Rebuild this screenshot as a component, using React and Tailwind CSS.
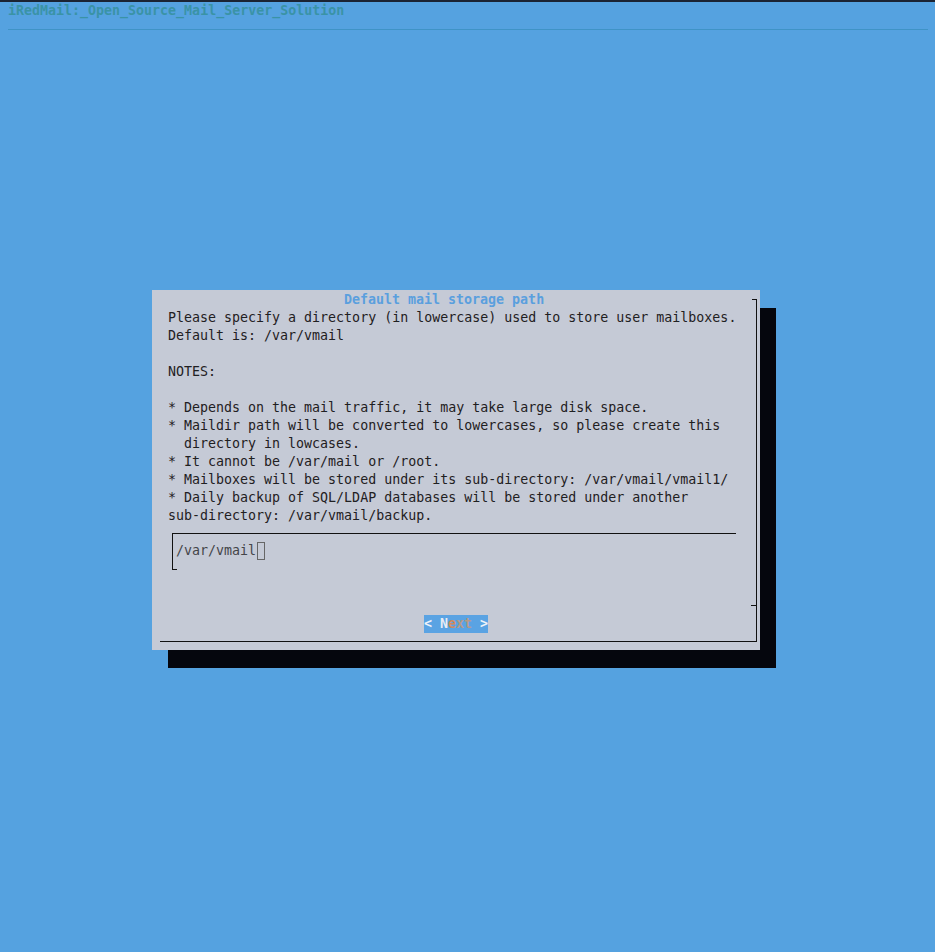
import React from "react";

const lines = [
  "Please specify a directory (in lowercase) used to store user mailboxes.",
  "Default is: /var/vmail",
  "",
  "NOTES:",
  "",
  "* Depends on the mail traffic, it may take large disk space.",
  "* Maildir path will be converted to lowercases, so please create this",
  "  directory in lowcases.",
  "* It cannot be /var/mail or /root.",
  "* Mailboxes will be stored under its sub-directory: /var/vmail/vmail1/",
  "* Daily backup of SQL/LDAP databases will be stored under another",
  "sub-directory: /var/vmail/backup.",
];

const mono = { fontFamily: '"DejaVu Sans Mono", "Liberation Mono", monospace' };

function Row({ children, className = "" }) {
  return <div className={`h-[18px] leading-[18px] whitespace-pre ${className}`}>{children}</div>;
}

export default function App() {
  return (
    <div
      className="w-[935px] h-[952px] bg-[#55a2e0] flex flex-col text-[13.3px] overflow-hidden"
      style={mono}
    >
      <div className="h-[2px] bg-[#1b2434]" />
      <Row className="pl-[8px] font-bold text-[#3a93a6]">iRedMail:_Open_Source_Mail_Server_Solution</Row>
      <div className="h-[18px] flex items-center pl-[8px]">
        <div className="h-px w-[920px] bg-[#3f93c6]" />
      </div>

      {/* dialog */}
      <div className="mt-[252px] ml-[152px] w-[608px] h-[360px] bg-[#c5cad6] shadow-[16px_18px_0_0_#05060d] flow-root">
        <div className="ml-[8px] mt-[9px] w-[597px] h-[343px] border-r border-b border-[#111] relative flow-root">
          <div className="absolute top-0 right-0 w-[4px] h-px bg-[#111]" />
          <div className="absolute top-[306px] right-0 w-[5px] h-px bg-[#111]" />
          <div className="-mt-[8px] pl-[8px] text-[#1f2022]">
            <Row className="pl-[176px] font-bold text-[#5a9fde]">Default mail storage path</Row>
            {lines.map((l, i) => (
              <Row key={i}>{l}</Row>
            ))}

            {/* input box */}
            <div className="h-[54px] pt-[8px] pl-[4px]">
              <div className="w-[564px] h-[37px] border-t border-l border-[#111] relative pt-[8px] pl-[3px]">
                <div className="absolute bottom-0 left-0 w-[4px] h-px bg-[#111]" />
                <div className="h-[18px] leading-[18px] flex text-[#444549]">
                  <span className="whitespace-pre">/var/vmail</span>
                  <span className="w-[8px] h-[18px] border border-[#666] ml-[1px]" />
                </div>
              </div>
            </div>

            <div className="h-[36px]" />
            <div className="ml-[256px] w-[64px] h-[18px] leading-[18px] bg-[#5aa3e3] whitespace-pre font-bold">
              <span className="text-[#eef2f8]">{"< "}</span>
              <span className="text-[#e8edf4]">N</span>
              <span className="text-[#d08a5e]">e</span>
              <span className="text-[#b49a88]">xt</span>
              <span className="text-[#eef2f8]">{" >"}</span>
            </div>
          </div>
        </div>
      </div>
    </div>
  );
}
